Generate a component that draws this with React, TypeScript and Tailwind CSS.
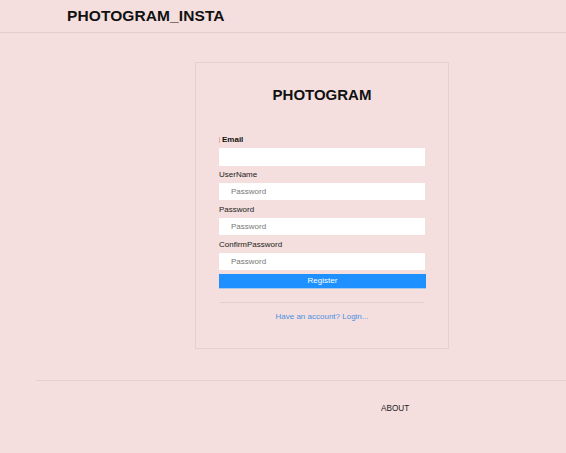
import React from 'react';

// --- Register form fields ---
const fields = [
  { label: 'UserName', placeholder: 'Password' },
  { label: 'Password', placeholder: 'Password' },
  { label: 'ConfirmPassword', placeholder: 'Password' },
];

const App: React.FC = () => {
  return (
    <div
      className="min-h-screen bg-[#f4dfde] text-[#111]"
      style={{ fontFamily: '"Liberation Sans", Arial, sans-serif' }}
    >
      {/* --- Header --- */}
      <header className="h-[33px] border-b border-[#e6cdcd] pl-[67px] flex items-center">
        <h1 className="text-[15.5px] font-bold leading-none tracking-[0.1px]">PHOTOGRAM_INSTA</h1>
      </header>

      {/* --- Register Card --- */}
      <main className="pt-[29px] pl-[195px]">
        <div className="w-[254px] h-[287px] border border-[#e6cfcf] px-[23px] pt-[23px]">
          <h2 className="text-center text-[15px] font-bold leading-[18px]">PHOTOGRAM</h2>

          <form className="mt-[31px]" onSubmit={(e) => e.preventDefault()}>
            <label className="flex items-center h-[10px] mb-[3px] text-[8px] font-bold leading-[10px]">
              <span className="w-px h-[6px] bg-[#e4a8a8] mr-[2px]" />
              Email
            </label>
            <input className="block w-[206px] h-[17.5px] bg-white outline-none" />

            {fields.map((f) => (
              <div key={f.label}>
                <label className="block mt-[4.5px] mb-[3px] h-[10px] text-[8px] leading-[10px] text-[#222]">
                  {f.label}
                </label>
                <input
                  type="password"
                  placeholder={f.placeholder}
                  className="block w-[206px] h-[17.3px] bg-white pl-[12px] text-[8px] outline-none placeholder:text-[#777]"
                />
              </div>
            ))}

            <button
              type="submit"
              className="mt-[4px] block w-[207px] h-[15px] bg-[#1e90ff] border-b border-[#a8c8ec] text-white text-[8px] leading-[14px]"
            >
              Register
            </button>
          </form>

          <hr className="mt-[13px] mx-[1px] border-t border-[#e6cdcd]" />

          <div className="mt-[9px] text-center text-[8px] leading-[10px] text-[#4a90e2]">
            <a href="#">Have an account? Login...</a>
          </div>
        </div>
      </main>

      {/* --- Footer --- */}
      <footer className="mt-[31px] ml-[36px] border-t border-[#e6d0d0]">
        <div className="pt-[23px] pl-[345px] text-[8.2px] leading-[10px] text-[#222]">ABOUT</div>
      </footer>
    </div>
  );
};

export default App;
